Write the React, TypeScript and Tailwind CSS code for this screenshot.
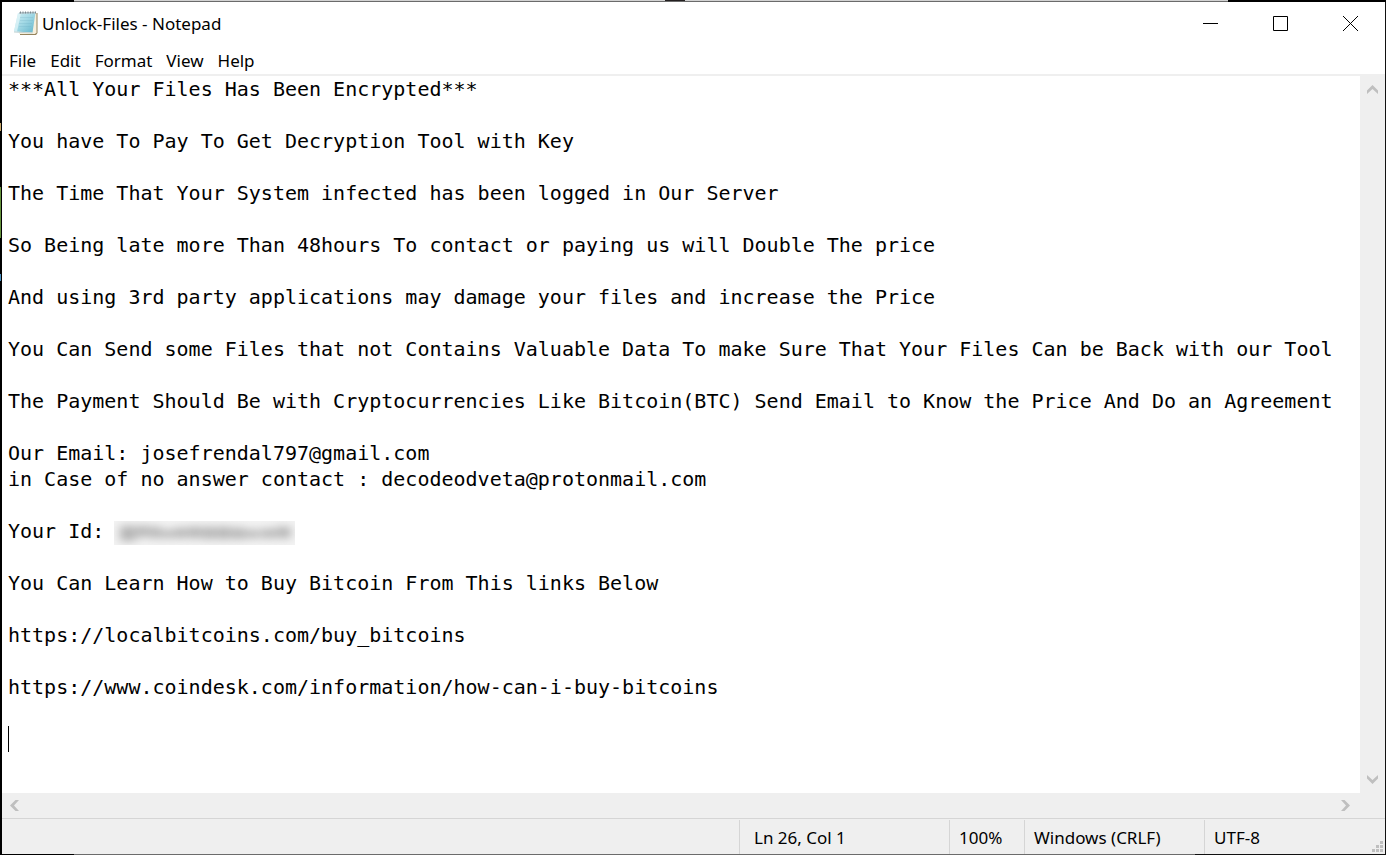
import React from "react";

const note = `***All Your Files Has Been Encrypted***

You have To Pay To Get Decryption Tool with Key

The Time That Your System infected has been logged in Our Server

So Being late more Than 48hours To contact or paying us will Double The price

And using 3rd party applications may damage your files and increase the Price

You Can Send some Files that not Contains Valuable Data To make Sure That Your Files Can be Back with our Tool

The Payment Should Be with Cryptocurrencies Like Bitcoin(BTC) Send Email to Know the Price And Do an Agreement

Our Email: josefrendal797@gmail.com
in Case of no answer contact : decodeodveta@protonmail.com

Your Id:

You Can Learn How to Buy Bitcoin From This links Below

https://localbitcoins.com/buy_bitcoins

https://www.coindesk.com/information/how-can-i-buy-bitcoins

`;

const menus = ["File", "Edit", "Format", "View", "Help"];

const arrows = {
  up: "M0 9V5.5L5.5 0L11 5.5V9L5.5 4Z",
  down: "M0 0V3.5L5.5 9L11 3.5V0L5.5 5Z",
  left: "M9 0H5.5L0 5.5L5.5 11H9L4 5.5Z",
  right: "M0 0H3.5L9 5.5L3.5 11H0L5 5.5Z",
};

function ScrollButton({ dir }: { dir: keyof typeof arrows }) {
  const upright = dir === "up" || dir === "down";
  return (
    <button
      type="button"
      aria-label={`Scroll ${dir}`}
      className="flex size-[25px] shrink-0 items-center justify-center"
    >
      <svg width={upright ? 11 : 9} height={upright ? 9 : 11} fill="#bfbfbf" aria-hidden="true">
        <path d={arrows[dir]} />
      </svg>
    </button>
  );
}

function NotepadIcon() {
  return (
    <svg width="24" height="26" viewBox="0 0 24 26" aria-hidden="true">
      <defs>
        <linearGradient id="page" x1="0" y1="0" x2="1" y2="1">
          <stop offset="0" stopColor="#d3f0f5" />
          <stop offset="0.45" stopColor="#a5dae6" />
          <stop offset="1" stopColor="#62b4ca" />
        </linearGradient>
      </defs>
      <path d="M20 3H23.5V23L22 25H6V23Z" fill="#94835c" />
      <path d="M19 3H22.5V22.5L21 24H5V22Z" fill="#f6efdc" />
      <path d="M4 3L21.5 2.5L18.5 22.5L0 21.5Z" fill="url(#page)" />
      <path d="M4 3L7 3L3 21.7L0 21.5Z" fill="#e4f7f9" opacity="0.7" />
      <path d="M6 7.5H19M6 10.5H19M5 13.5H18M5 16.5H17" stroke="#5c9fb8" strokeOpacity="0.18" />
      <path d="M0 21.5L18.5 22.5V23.5L0 22.5Z" fill="#c3d3d4" />
      <path d="M5 3L21.5 2.5" stroke="#b4c2c8" strokeWidth="1.5" />
      <path
        d="M6.5 1.5V3.5M9 1.5V3.5M11.5 1.5V3.5M14 1.5V3.5M16.5 1.5V3.5M19 1.5V3.5M21.5 1.5V3.5"
        stroke="#7b888e"
      />
    </svg>
  );
}

function HiddenId() {
  return (
    <svg
      width="181"
      height="24"
      viewBox="0 0 181 24"
      className="absolute left-28 top-[445px]"
      role="img"
      aria-label="Hidden id"
    >
      <defs>
        <filter id="smear" x="-10%" y="-50%" width="120%" height="200%">
          <feGaussianBlur stdDeviation="5 4" />
        </filter>
      </defs>
      <rect width="181" height="24" fill="#f3f3f3" />
      <g filter="url(#smear)" fill="#b4b4b4">
        <path d="M6 5H22V20H6ZM23 5H35V16H23ZM36 6H47V17H36ZM48 9H59V17H48ZM60 7H73V17H60ZM74 6H88V17H74ZM89 6H101V18H89ZM102 6H117V18H102ZM118 7H131V18H118ZM132 9H145V17H132ZM147 8H161V17H147ZM162 6H177V17H162Z" />
      </g>
    </svg>
  );
}

export default function App() {
  return (
    <div className="flex h-screen flex-col bg-[#111] font-['Noto_Sans','Open_Sans',sans-serif] text-[17px] leading-6 text-black">
      <div className="flex h-0.5 shrink-0" aria-hidden="true">
        <div className="w-[74px] bg-black" />
        <div className="flex flex-1 justify-center border-b border-[#6b6b6b] bg-[#d2d2d2]">
          <div className="ml-12 h-px w-5 bg-[#231f20]" />
        </div>
        <div className="w-[158px] bg-black" />
      </div>

      <div className="flex min-h-0 flex-1 pr-px">
        <div className="flex w-0.5 shrink-0 flex-col bg-black" aria-hidden="true">
          <div className="mt-[121px] h-2 w-px bg-[#c9a86a]" />
          <div className="mt-14 h-[51px] w-px bg-[#62913b]" />
          <div className="mt-9 h-[7px] w-px bg-[#4a8fc0]" />
        </div>

        <main className="flex min-w-0 flex-1 flex-col bg-white">
          <header className="flex h-[46px] shrink-0 items-start justify-between">
            <div className="flex items-center gap-1 pl-3 pt-2">
              <NotepadIcon />
              <h1 className="whitespace-nowrap pt-0.5">Unlock-Files - Notepad</h1>
            </div>
            <div className="flex h-[43px]">
              <button type="button" aria-label="Minimize" className="flex w-[70px] items-center justify-center">
                <svg width="15" height="15" aria-hidden="true">
                  <path d="M0 7.5H15" stroke="#000" />
                </svg>
              </button>
              <button type="button" aria-label="Maximize" className="flex w-[70px] items-center justify-center">
                <svg width="15" height="15" fill="none" aria-hidden="true">
                  <path d="M.5 .5H14.5V14.5H.5Z" stroke="#000" />
                </svg>
              </button>
              <button type="button" aria-label="Close" className="flex w-[70px] items-center justify-center">
                <svg width="15" height="15" aria-hidden="true">
                  <path d="M0 0L15 15M15 0L0 15" stroke="#000" />
                </svg>
              </button>
            </div>
          </header>

          <nav className="flex h-[26px] shrink-0 items-center gap-3.5 pl-[7px]">
            {menus.map((name) => (
              <button type="button" key={name}>
                {name}
              </button>
            ))}
          </nav>

          <div className="flex min-h-0 flex-1 border-t-2 border-[#efefef]">
            <div className="relative flex min-w-0 flex-1">
              <textarea
                aria-label="Text editor"
                spellCheck={false}
                wrap="off"
                defaultValue={note}
                className="flex-1 resize-none overflow-hidden pl-1.5 font-['DejaVu_Sans_Mono','Liberation_Mono',monospace] text-[20px] leading-[26px] outline-none"
              />
              <HiddenId />
              <span className="absolute left-1.5 top-[650px] h-[26px] w-px bg-black" aria-hidden="true" />
            </div>
            <div className="flex w-[25px] shrink-0 flex-col justify-between bg-[#efefef] py-px">
              <ScrollButton dir="up" />
              <ScrollButton dir="down" />
            </div>
          </div>

          <div className="flex h-[25px] shrink-0 justify-between bg-[#efefef] pr-[27px]">
            <ScrollButton dir="left" />
            <ScrollButton dir="right" />
          </div>

          <footer className="flex h-9 shrink-0 justify-end border-t border-[#d5d5d5] bg-[#efefef] pt-px leading-9">
            <div className="w-[210px] border-l border-[#d5d5d5] pl-3.5">Ln 26, Col 1</div>
            <div className="w-[75px] border-l border-[#d5d5d5] pl-[9px]">100%</div>
            <div className="w-[180px] border-l border-[#d5d5d5] pl-[9px]">Windows (CRLF)</div>
            <div className="flex w-[181px] justify-between border-l border-[#d5d5d5] pl-[9px] pr-0.5">
              <span>UTF-8</span>
              <svg width="11" height="11" fill="#bfbfbf" className="mb-0.5 self-end" aria-hidden="true">
                <path d="M8 0h3v3h-3zM4 4h3v3h-3zM8 4h3v3h-3zM0 8h3v3h-3zM4 8h3v3h-3zM8 8h3v3h-3z" />
              </svg>
            </div>
          </footer>
        </main>
      </div>

      <div className="flex h-px shrink-0" aria-hidden="true">
        <div className="w-[74px] bg-black" />
        <div className="flex-1 bg-[#6b6b6b]" />
        <div className="w-[191px] bg-[#111]" />
      </div>
    </div>
  );
}
